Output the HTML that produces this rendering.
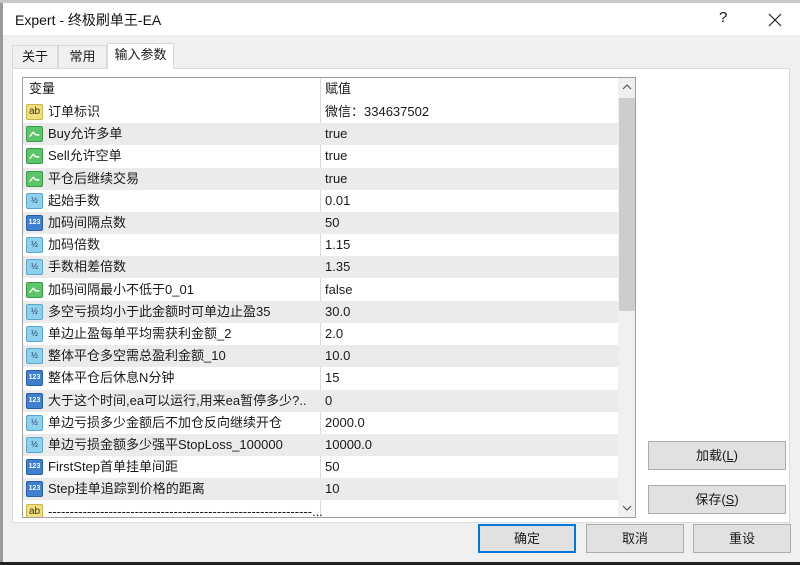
<!DOCTYPE html>
<html><head><meta charset="utf-8"><style>
*{margin:0;padding:0;box-sizing:border-box}
body{width:800px;height:565px;overflow:hidden;background:#f0f0f0;font-family:"Liberation Sans","Noto Sans CJK SC",sans-serif;font-size:13px;color:#1a1a1a;position:relative}
.a{position:absolute}
.top{left:0;top:0;width:800px;height:3px;background:#c8c8c8}
.title{left:0;top:3px;width:800px;height:32px;background:#fff;border-left:3px solid #9a9a9a}
.title span{position:absolute;left:12px;top:7px;font-size:14px;color:#111}
.tab{top:45px;height:23px;border:1px solid #d9d9d9;border-bottom:none;background:#f0f0f0;text-align:center;line-height:22px}
.panel{left:12px;top:68px;width:778px;height:455px;background:#fff;border:1px solid #dcdcdc}
.grid{left:22px;top:77px;width:614px;height:441px;border:1px solid #a0a0a0;background:#fff;overflow:hidden}
.row{position:absolute;left:0;width:595px;height:22px;line-height:22px}
.row.g{background:#ebebeb}
.row .n{position:absolute;left:25px;top:0;white-space:nowrap}
.row .v{position:absolute;left:302px;top:0}
.row .i{position:absolute;left:3px;top:3px;width:17px;height:16px;border-radius:2px}
.sep{position:absolute;left:297px;top:0;width:1px;height:441px;background:#dadada}
.btn{height:29px;background:#e1e1e1;border:1px solid #adadad;text-align:center;line-height:27px;font-size:13px}
</style></head><body>
<div class="a top"></div>
<div class="a title"><span>Expert - 终极刷单王-EA</span>
<span style="left:716px;top:6px;font-size:15px">?</span>
<svg class="a" style="left:764px;top:9px" width="16" height="16"><path d="M2 2L14 14M14 2L2 14" stroke="#222" stroke-width="1.2"/></svg></div>
<div class="a" style="left:0;top:35px;width:3px;height:530px;background:#9a9a9a"></div>
<div class="a panel"></div>
<div class="a tab" style="left:12px;width:46px">关于</div>
<div class="a tab" style="left:58px;width:49px">常用</div>
<div class="a tab" style="left:107px;top:43px;height:26px;width:67px;background:#fff">输入参数</div>
<div class="a grid">
<div class="row" style="top:0"><span class="n" style="left:6px">变量</span><span class="v">赋值</span></div>
<div class="sep"></div>
<div id="rows"></div>
<div class="a" style="left:595px;top:0;width:18px;height:441px;background:#f0f0f0"></div>
<div class="a" style="left:596px;top:20px;width:16px;height:213px;background:#cdcdcd"></div>
<svg class="a" style="left:598px;top:4px" width="12" height="10"><path d="M2 7L6 3L10 7" stroke="#555" fill="none" stroke-width="1.2"/></svg>
<svg class="a" style="left:598px;top:425px" width="12" height="10"><path d="M2 3L6 7L10 3" stroke="#555" fill="none" stroke-width="1.2"/></svg>
</div>
<div class="a btn" style="left:648px;top:441px;width:138px">加载(<u>L</u>)</div>
<div class="a btn" style="left:648px;top:485px;width:138px">保存(<u>S</u>)</div>
<div class="a btn" style="left:478px;top:524px;width:98px;border:2px solid #0078d7;line-height:25px">确定</div>
<div class="a btn" style="left:586px;top:524px;width:98px">取消</div>
<div class="a btn" style="left:693px;top:524px;width:98px">重设</div>
<div class="a" style="left:0;top:562px;width:800px;height:3px;background:#222"></div>
<script>
var d=[["ab","订单标识","微信：334637502"],["b","Buy允许多单","true"],["b","Sell允许空单","true"],["b","平仓后继续交易","true"],["h","起始手数","0.01"],["n","加码间隔点数","50"],["h","加码倍数","1.15"],["h","手数相差倍数","1.35"],["b","加码间隔最小不低于0_01","false"],["h","多空亏损均小于此金额时可单边止盈35","30.0"],["h","单边止盈每单平均需获利金额_2","2.0"],["h","整体平仓多空需总盈利金额_10","10.0"],["n","整体平仓后休息N分钟","15"],["n","大于这个时间,ea可以运行,用来ea暂停多少?..","0"],["h","单边亏损多少金额后不加仓反向继续开仓","2000.0"],["h","单边亏损金额多少强平StopLoss_100000","10000.0"],["n","FirstStep首单挂单间距","50"],["n","Step挂单追踪到价格的距离","10"],["ab","-------------------------------------------------------------...",""]];
var h="";
d.forEach(function(r,k){
var ic;
if(r[0]=="ab")ic='<div class="i" style="background:#f3df7a;border:1px solid #c9b24a;font-size:10px;line-height:13px;color:#333;text-align:center">ab</div>';
else if(r[0]=="b")ic='<svg class="i" viewBox="0 0 17 16" style="background:#5cc46a;border:1px solid #3a9a48"><path d="M3 11L7 6L10 9L14 9" stroke="#fff" fill="none" stroke-width="1.6"/></svg>';
else if(r[0]=="n")ic='<div class="i" style="background:#3f7fd0;border:1px solid #2a5ea8;font-size:7px;line-height:14px;color:#fff;text-align:center;font-weight:bold">123</div>';
else ic='<div class="i" style="background:#8fd0ee;border:1px solid #5aa8cc;font-size:8px;line-height:14px;color:#235;text-align:center">½</div>';
h+='<div class="row'+(k%2?' g':'')+'" style="top:'+(23+k*22.2)+'px">'+ic+'<span class="n">'+r[1]+'</span><span class="v">'+r[2]+'</span></div>';
});
document.getElementById("rows").innerHTML=h;
</script>
</body></html>
